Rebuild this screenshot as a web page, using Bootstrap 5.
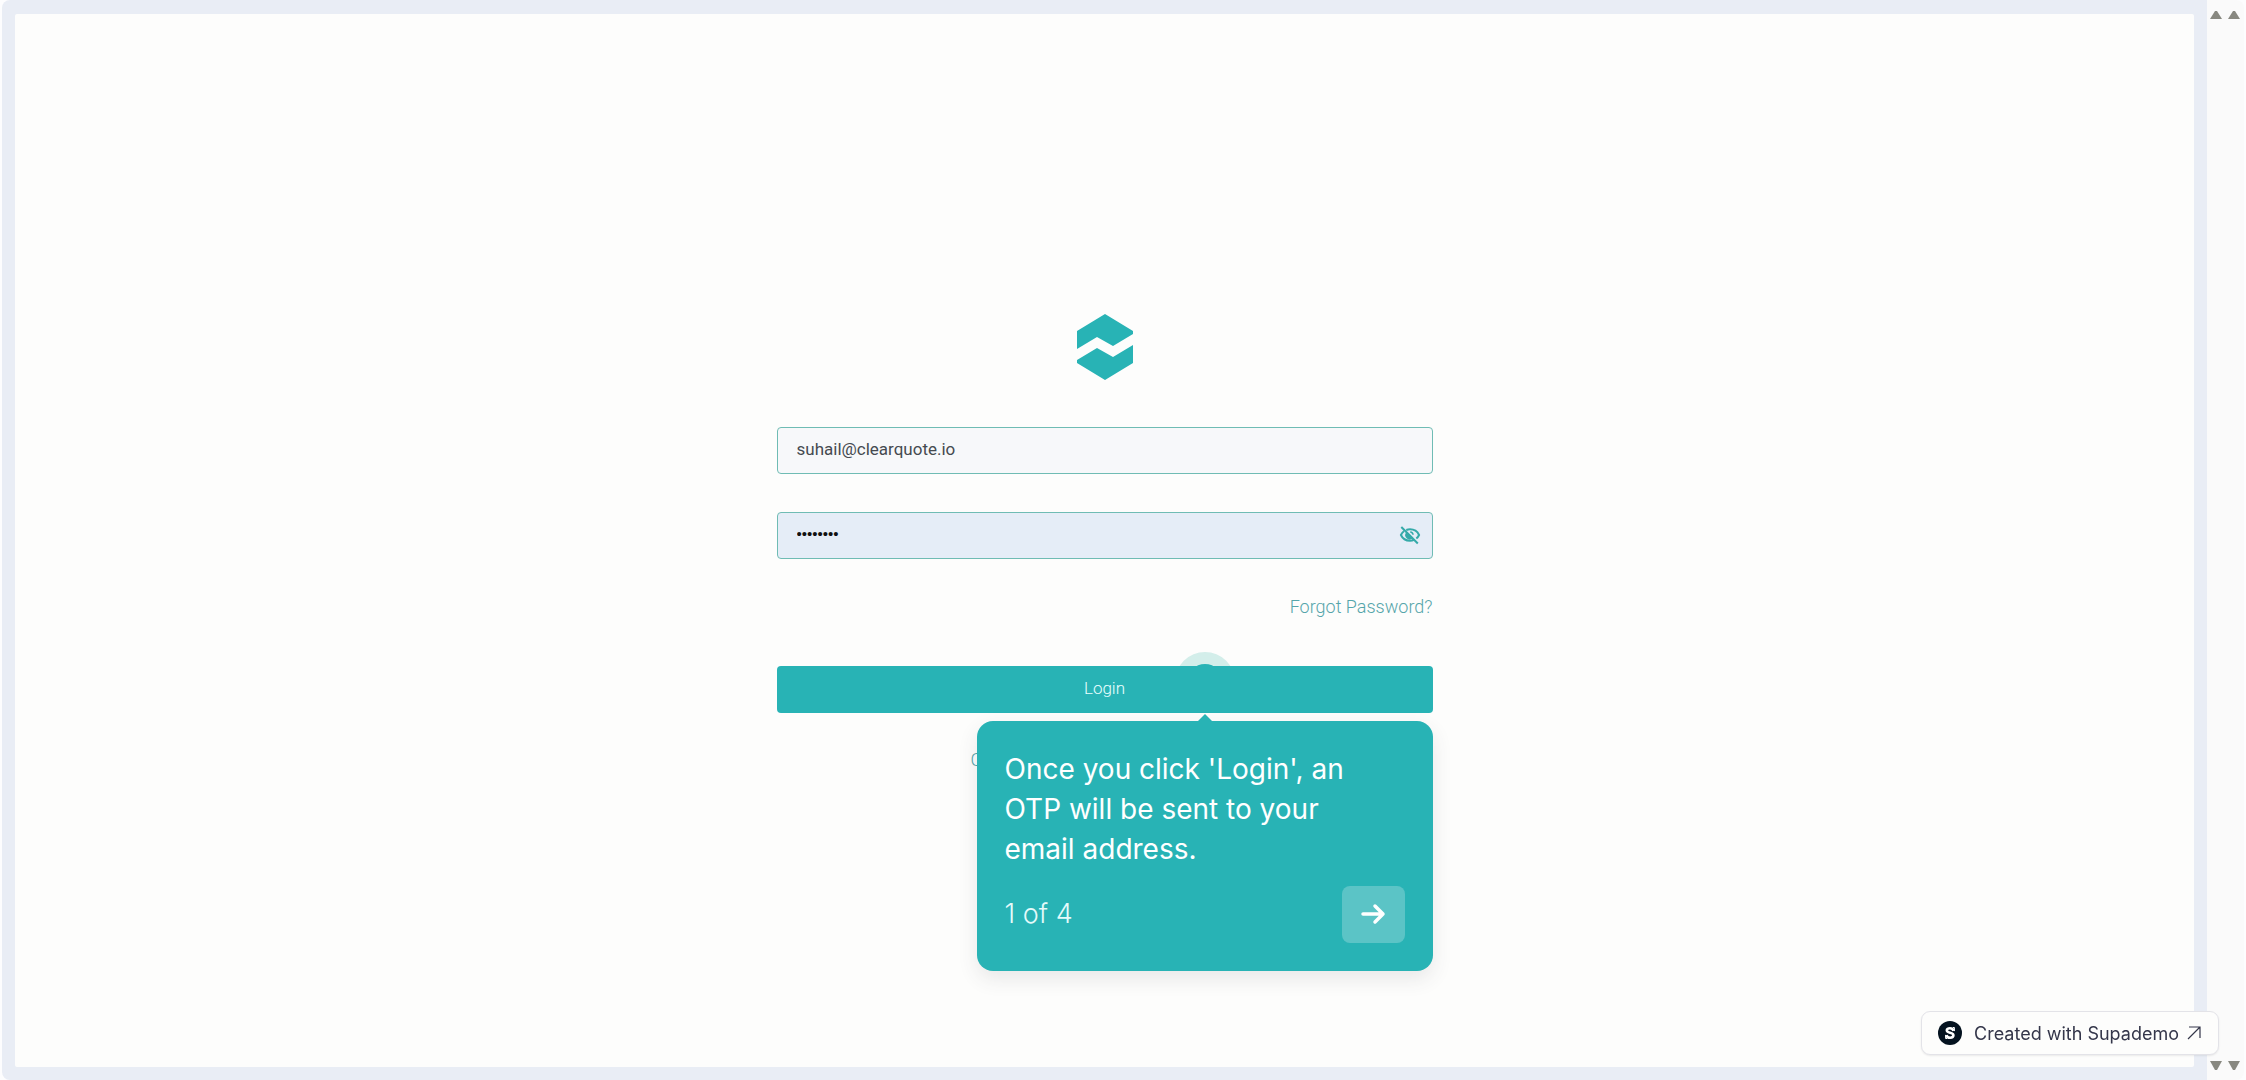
<!DOCTYPE html>
<html lang="en">
<head>
<meta charset="utf-8">
<meta name="viewport" content="width=device-width, initial-scale=1">
<title>ClearQuote login</title>
<link href="https://cdn.jsdelivr.net/npm/bootstrap@5.3.0/dist/css/bootstrap.min.css" rel="stylesheet">
<style>
  :root { --teal: #28b3b5; }
  body { background: #fdfdfe; font-family: Inter, "Liberation Sans", sans-serif; }
  .demo-frame { background: #e9edf5; padding: 14px 13px 13px; margin-left: 2px; border-radius: 8px 0 0 8px; }
  .demo-screen { background: #fdfdfc; border-radius: 2px; padding-top: 4px; }
  .scroll-strip { width: 37px; margin-right: 2px; background: #fafafa; padding: 11px 4px 10px 3px; border-radius: 0 8px 8px 0; }
  .login-form { max-width: 656px; font-family: Roboto, "Liberation Sans", sans-serif; font-size: 18px; line-height: 24px; }
  .login-field { height: 47px; border: 1px solid #6fbcb4; border-radius: 4px; padding: 0 19px 2px; font-size: 17px; color: #454a50; }
  .login-field:focus { box-shadow: none; border-color: var(--teal); }
  .field-email { background: #f7f8fa; margin-top: 47px; }
  .field-secret, .field-secret:focus { background: #e5edf7; color: #111; font-family: "Liberation Sans", sans-serif; font-size: 15px; padding-bottom: 4px; }
  .secret-group { margin-top: 38px; }
  .forgot-link { margin-top: 36px; }
  .submit-group { margin-top: 47px; }
  .eye-toggle { right: 12px; top: 12px; line-height: 0; }
  .soft-link { color: #55a5aa; font-weight: 300; }
  .login-submit, .login-submit:hover { height: 47px; background: var(--teal); color: #e9ffff; border: 0; border-radius: 4px; font-size: 17px; font-weight: 300; position: relative; z-index: 1; }
  .hotspot { width: 60px; height: 60px; right: 198px; top: -14px; border-radius: 50%; background: #d3eeea; }
  .hotspot-core { width: 36px; height: 36px; border-radius: 50%; background: var(--teal); }
  .tour-card { top: 55px; right: 0; width: 456px; padding: 28px; z-index: 2; background: var(--teal); color: #fff; border-radius: 16px; box-shadow: 0 8px 20px rgba(60, 60, 70, .11); font-family: Inter, sans-serif; font-size: 28px; line-height: 40px; text-align: left; }
  .tour-text { padding-right: 28px; margin-bottom: 17px; }
  .tour-pointer { right: 221px; top: -7px; line-height: 0; }
  .tour-count { font-size: 27px; font-weight: 300; color: #e4fafa; }
  .tour-next, .tour-next:hover { width: 63px; height: 57px; background: #5bc4c6; border: 0; border-radius: 8px; }
  .signup-row { width: 268px; margin-top: 35px; }
  .made-with { right: 27px; bottom: 25px; height: 44px; padding: 0 17px 0 16px; gap: 12px; z-index: 5; background: #fdfdfc; border: 1px solid #e3e3e8; border-radius: 9px; color: #34364a; font-size: 18px; box-shadow: 0 1px 2px rgba(0, 0, 0, .08); }
</style>
<script src="https://cdn.jsdelivr.net/npm/bootstrap@5.3.0/dist/js/bootstrap.bundle.min.js"></script>
</head>
<body>
<div class="d-flex vh-100 overflow-hidden">
  <div class="demo-frame d-flex flex-grow-1">
    <main class="demo-screen d-flex flex-grow-1 justify-content-center align-items-center">
      <form class="login-form w-100 d-flex flex-column">
        <svg class="align-self-center" width="56" height="66" viewBox="0 0 56 66" fill="#28b3b5" role="img" aria-label="ClearQuote">
          <path d="M28 0 56 17v3L36 32 20 23 0 35V17Z"/>
          <path d="M56 31v18L28 66 0 49v-3l20-12 16 9Z"/>
        </svg>
        <input class="form-control login-field field-email" type="email" value="suhail@clearquote.io" aria-label="Email">
        <div class="secret-group position-relative">
          <input class="form-control login-field field-secret" type="password" value="password" aria-label="Password">
          <button class="btn p-0 border-0 position-absolute eye-toggle" type="button" aria-label="Show password">
            <svg width="22" height="22" viewBox="0 0 24 24" fill="none" stroke="#35aaa9" stroke-width="2.2"><path d="M8 6.600C9.200 6.100 10.600 5.800 12 5.800c4.500 0 8.200 2.500 9.900 6.200-.7 1.500-1.700 2.800-3 3.800M5.300 7.900C3.900 9 2.800 10.400 2.100 12c1.700 3.700 5.400 6.200 9.900 6.200 1.600 0 3.100-.3 4.500-.9M2.500 3.200l18 18"/><path d="M8.600 9.500a4 4 0 0 0 5.800 5.500ZM12.200 8.600a3.500 3.500 0 0 1 3.200 3.200" fill="#35aaa9" stroke-width="1.500"/></svg>
          </button>
        </div>
        <a class="soft-link forgot-link text-decoration-none align-self-end" href="#">Forgot Password?</a>
        <div class="submit-group position-relative">
          <div class="hotspot position-absolute d-flex align-items-center justify-content-center"><div class="hotspot-core"></div></div>
          <button class="btn login-submit w-100" type="submit">Login</button>
          <section class="tour-card position-absolute" aria-label="Tour step">
            <svg class="tour-pointer position-absolute" width="14" height="8" viewBox="0 0 14 8" fill="#28b3b5"><path d="M7 0 14 7v1H0V7Z"/></svg>
            <p class="tour-text">Once you click 'Login', an OTP will be sent to your email address.</p>
            <div class="d-flex justify-content-between align-items-center">
              <span class="tour-count">1 of 4</span>
              <button class="btn tour-next p-0 d-flex align-items-center justify-content-center" type="button" aria-label="Next">
                <svg width="26" height="22" viewBox="0 0 26 22" fill="none" stroke="#fff" stroke-width="3.500" stroke-linecap="round" stroke-linejoin="round"><path d="M3 11h20M15 3l8 8-8 8"/></svg>
              </button>
            </div>
          </section>
        </div>
        <div class="signup-row align-self-center"><a class="soft-link text-decoration-none" href="#">C</a></div>
      </form>
    </main>
  </div>
  <div class="scroll-strip d-flex flex-column justify-content-between">
    <div class="d-flex justify-content-between">
      <svg width="12" height="8" viewBox="0 0 12 8" fill="#888880"><path d="M5 0h2l5 8H0Z"/></svg>
      <svg width="12" height="8" viewBox="0 0 12 8" fill="#888880"><path d="M5 0h2l5 8H0Z"/></svg>
    </div>
    <div class="d-flex justify-content-between">
      <svg width="12" height="9" viewBox="0 0 12 9" fill="#888880"><path d="M0 0h12L7 9H5Z"/></svg>
      <svg width="12" height="9" viewBox="0 0 12 9" fill="#888880"><path d="M0 0h12L7 9H5Z"/></svg>
    </div>
  </div>
</div>
<a class="made-with position-fixed d-flex align-items-center text-decoration-none" href="#">
  <svg width="24" height="24" viewBox="0 0 24 24"><circle cx="12" cy="12" r="12" fill="#04121f"/><path d="M15.500 9.800C15 8 13.800 7.300 12 7.300c-2 0-3.200.8-3.200 2 0 3.200 6.600 1.900 6.600 5 0 1.500-1.300 2.400-3.300 2.400-2 0-3.300-.9-3.700-2.600" fill="none" stroke="#fff" stroke-width="2.600"/><path d="M15 6.500h1.400v3.600M9 17.500H7.600v-3.600" fill="none" stroke="#fff"/></svg>
  <span class="d-flex align-items-center gap-2">Created with Supademo
    <svg width="14" height="14" viewBox="0 0 14 14" fill="none" stroke="#34364a" stroke-width="1.200"><path d="M1 13 13 1M2 1h11v11"/></svg>
  </span>
</a>
</body>
</html>
